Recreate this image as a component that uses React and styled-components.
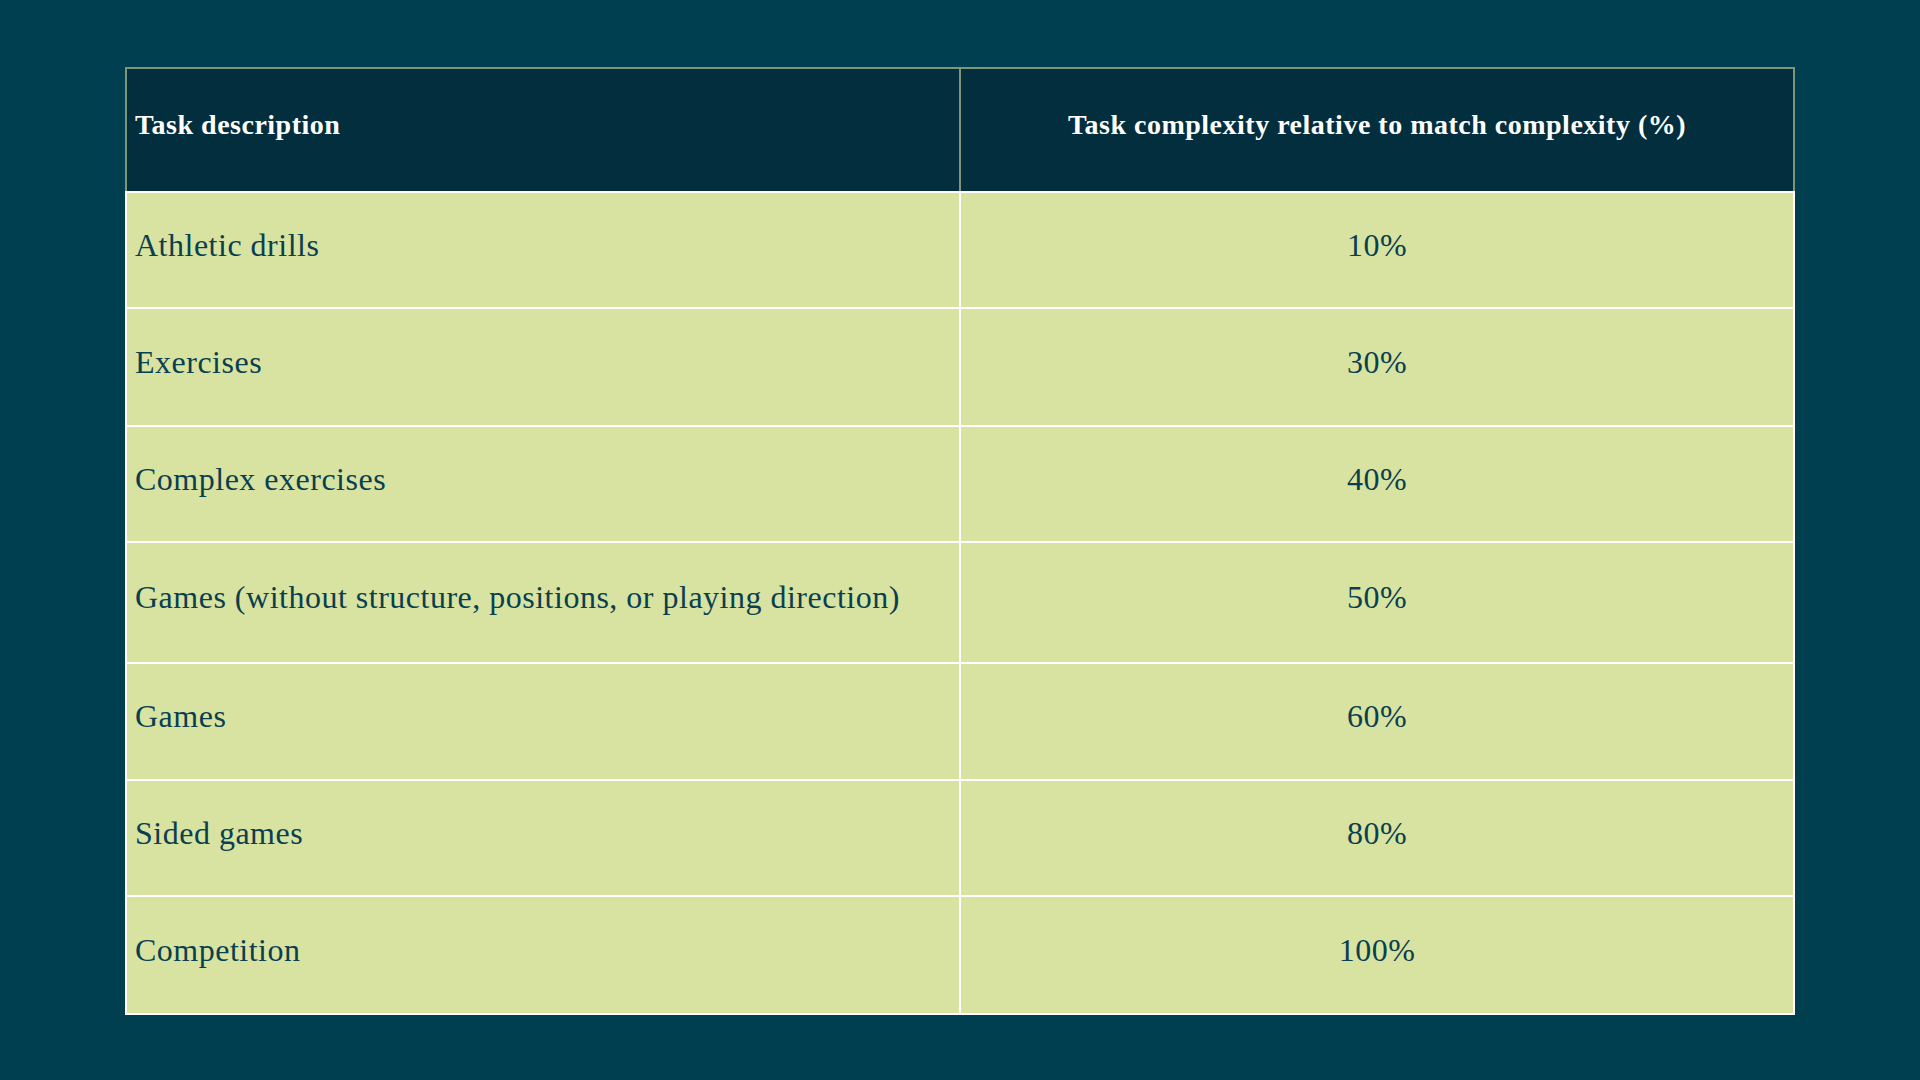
import React from 'react';
import styled, { createGlobalStyle } from 'styled-components';

const GlobalStyle = createGlobalStyle`
  html, body {
    margin: 0;
    padding: 0;
    background: #003f50;
  }
  body {
    font-family: 'Liberation Serif', 'Times New Roman', serif;
  }
`;

const Page = styled.div`
  width: 1920px;
  height: 1080px;
  box-sizing: border-box;
  padding: 67px 125px 0 125px;
  background: #003f50;
`;

const Table = styled.table`
  width: 100%;
  border-collapse: collapse;
  table-layout: fixed;
  border: 2px solid #9db58c;
`;

const HeadCell = styled.th`
  height: 124px;
  padding: 0 8px 10px 8px;
  box-sizing: border-box;
  background: #032e3e;
  color: #ffffff;
  font-size: 28px;
  font-weight: 700;
  letter-spacing: 0.5px;
  text-align: ${(p) => (p.$center ? 'center' : 'left')};
  vertical-align: middle;
  border: 2px solid #7f9478;
  border-bottom-color: #ffffff;
`;

const Row = styled.tr`
  height: ${(p) => p.$h || 117}px;
`;

const Cell = styled.td`
  padding: 0 8px 10px 8px;
  background: #d8e3a2;
  color: #0a3f4f;
  font-size: 32px;
  letter-spacing: 0.5px;
  text-align: ${(p) => (p.$center ? 'center' : 'left')};
  vertical-align: middle;
  border: 2px solid #ffffff;
`;

const rows = [
  ['Athletic drills', '10%', 116],
  ['Exercises', '30%', 118],
  ['Complex exercises', '40%', 116],
  ['Games (without structure, positions, or playing direction)', '50%', 121],
  ['Games', '60%', 117],
  ['Sided games', '80%', 116],
  ['Competition', '100%', 118],
];

export default function App() {
  return (
    <Page>
      <GlobalStyle />
      <Table>
        <thead>
          <tr>
            <HeadCell>Task description</HeadCell>
            <HeadCell $center>Task complexity relative to match complexity (%)</HeadCell>
          </tr>
        </thead>
        <tbody>
          {rows.map(([task, value, h]) => (
            <Row key={task} $h={h}>
              <Cell>{task}</Cell>
              <Cell $center>{value}</Cell>
            </Row>
          ))}
        </tbody>
      </Table>
    </Page>
  );
}
